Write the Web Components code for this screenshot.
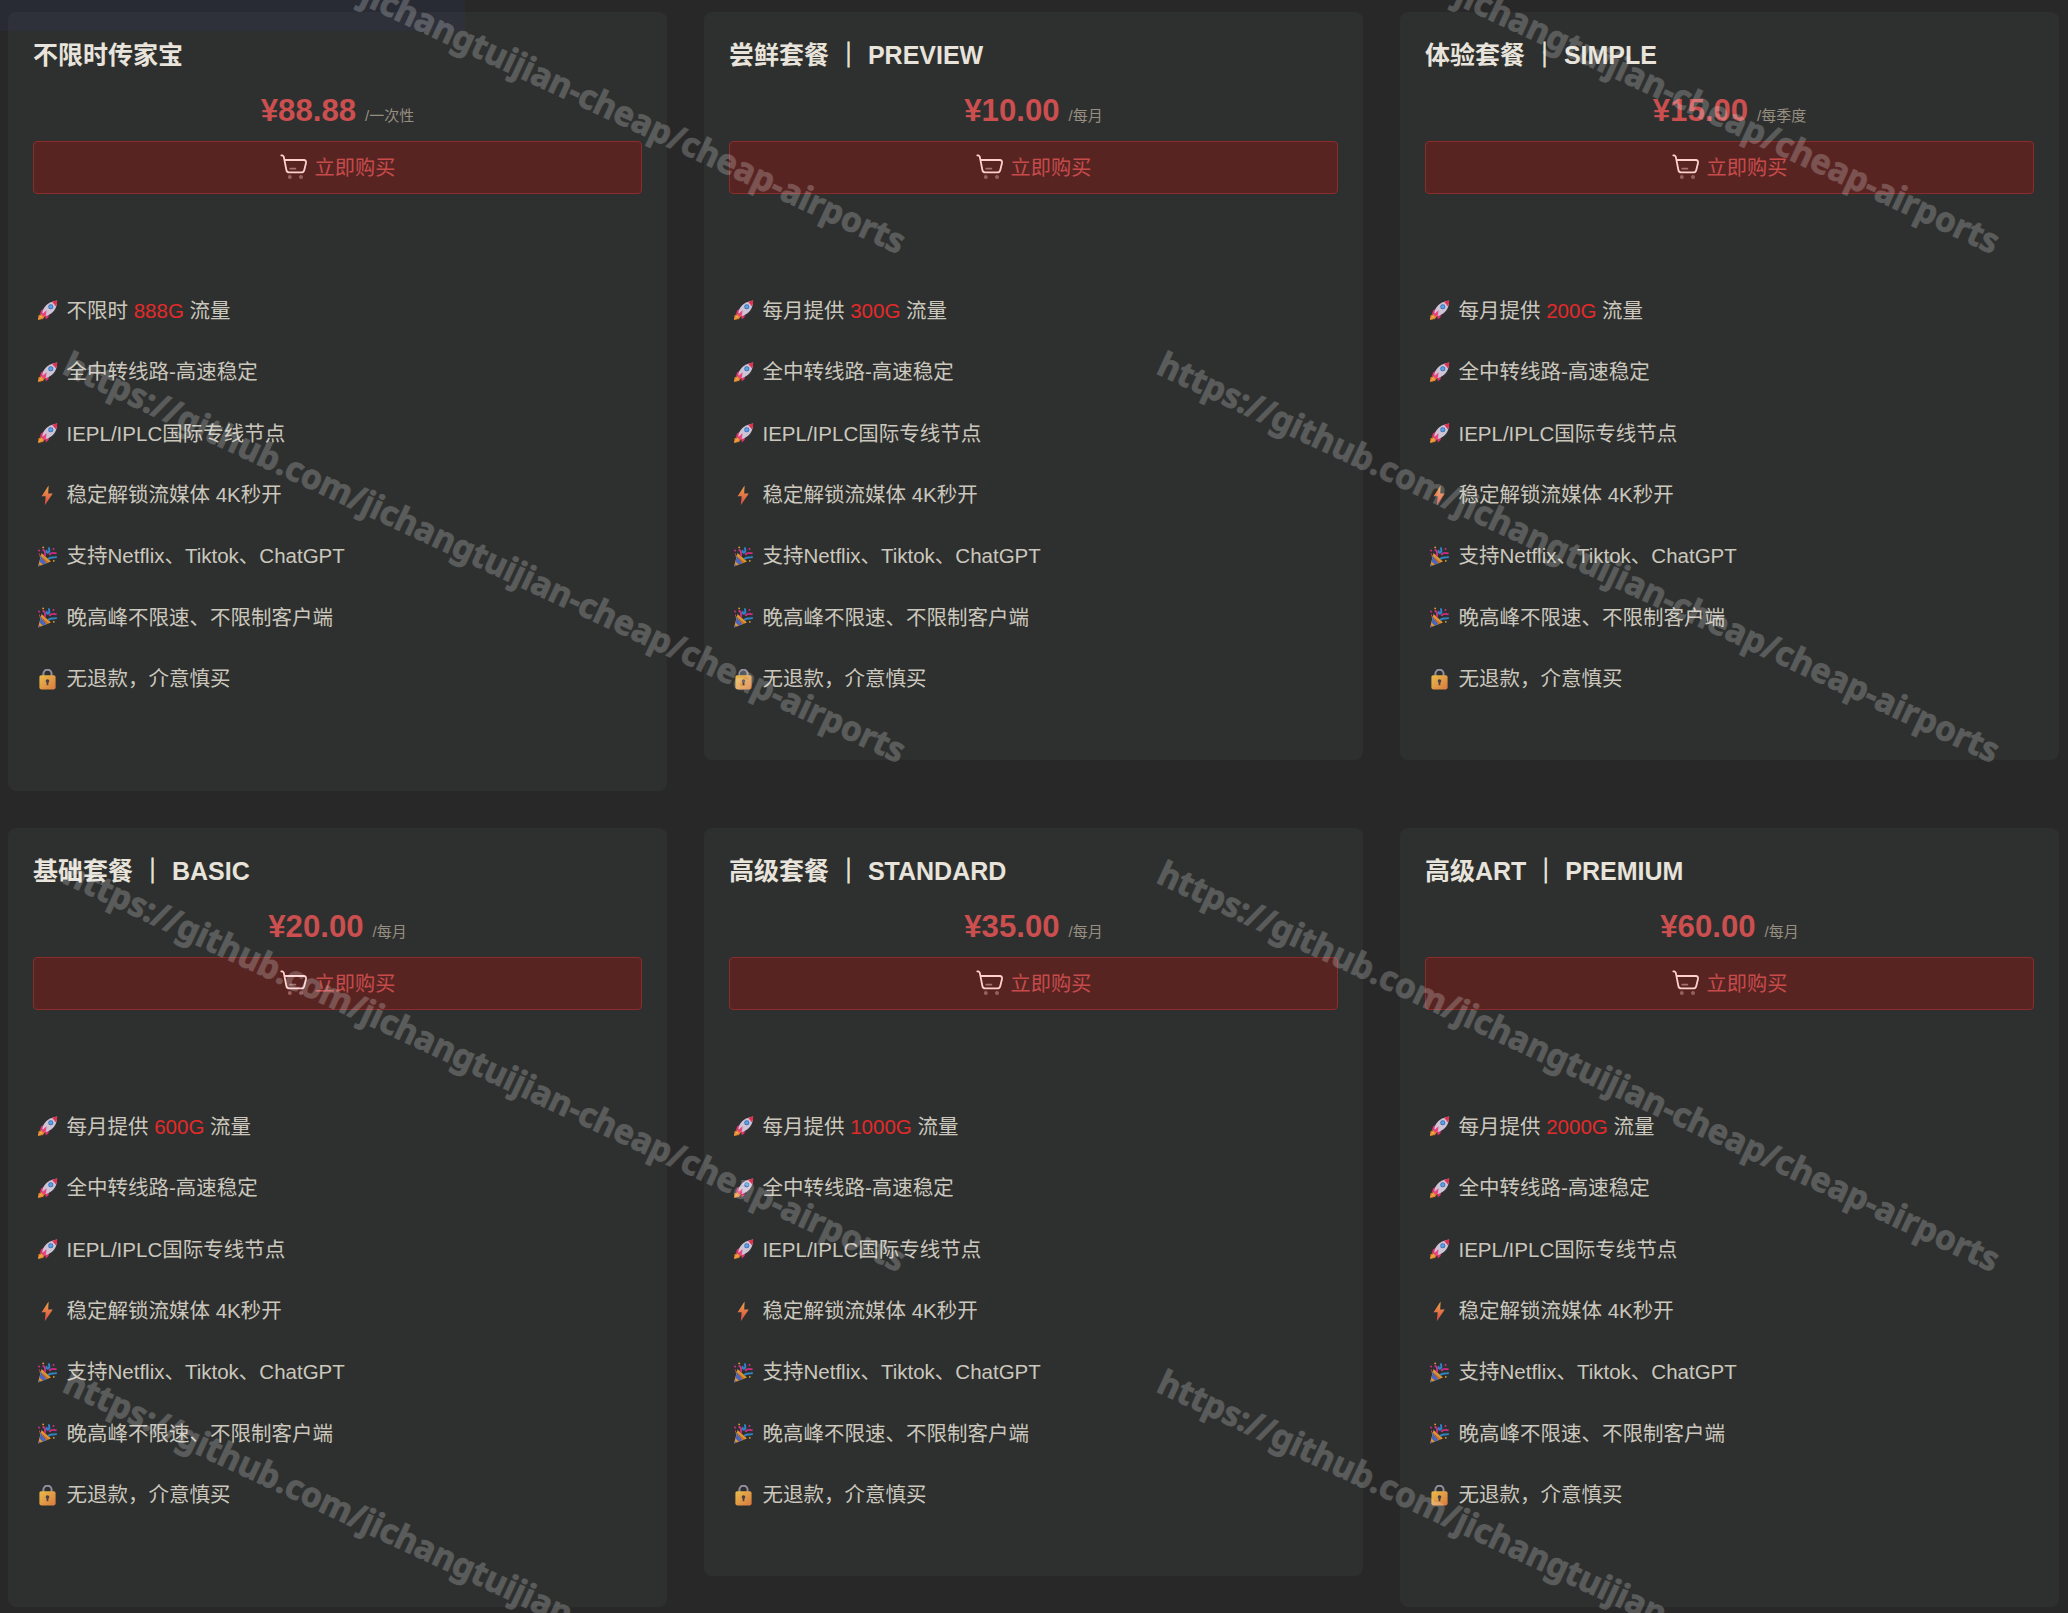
<!DOCTYPE html>
<html lang="zh-CN">
<head>
<meta charset="utf-8">
<title>套餐</title>
<style>
html,body{margin:0;height:1613px;overflow:hidden;background:#282828}
body{font-family:"Liberation Sans","Noto Sans CJK SC",sans-serif}
</style>
</head>
<body>
<plan-page></plan-page>
<script>
const ICONS = {
  rocket: `<path d="M1 20 1.4 15.5 5 13.5 8 16.3 6 19Z" fill="#d9822b"/><path d="M1 20 3 16 5.5 15 6 17Z" fill="#f0a040"/><path d="M7.5 8.6 4.2 10.2 2.8 14 7 13.2ZM12.2 12.8 11.6 17 8.8 19.6 8 14.4Z" fill="#e0336f"/><path d="M5.3 13.6C5.6 7.1 11 2 20 .6 20.4 8.6 15.6 14.6 8.6 16.2Z" fill="#cfc3d6"/><path d="M15.2 1.9C17 1 18.6.6 20.2.4 20.4 2.4 19.9 4.5 19 6.2Z" fill="#e0304f"/><circle cx="13.8" cy="6.8" r="2.5" fill="#3b6fb0"/><circle cx="13.8" cy="6.8" r="1.7" fill="#5aa2e8"/><path d="M4.4 14.8 9.6 10.2 8.8 15.8 6.2 16.6Z" fill="#e8437c"/>`,
  bolt: `<defs><linearGradient id="b" x2="0" y2="1"><stop stop-color="#e8a748"/><stop offset="1" stop-color="#dd4545"/></linearGradient></defs><path d="M11.6.6 4.6 11.3h4.1L7.8 20.2 15.8 8.6h-4.6Z" fill="url(#b)"/>`,
  party: `<path d="M4.6 7 1 20.4 14 15.6Z" fill="#dd9433"/><path d="M4.2 10 2.4 15.6 5.8 18.6 9.4 17.2ZM1.7 18 1 20.2 3.3 19.5Z" fill="#4c64bb"/><path d="M5.8 12.2 10.8 16.8" stroke="#b8651d" stroke-width="1.2"/><path d="M5.6 3.8C8.2 4.3 8.6 7 7.8 10.2M12.6 9C13.4 6.8 15.8 6.4 19.6 7.4" fill="none" stroke="#d12e88" stroke-width="1.9"/><path d="M12.2 1.4C11.4 3.2 13.6 4.6 11.4 6.6 9.6 7 8.8 5.2 10.4 4.4M11.4 13C13.4 10.6 16 12.4 19.8 10.8" fill="none" stroke="#2f85c7" stroke-width="2"/><path d="M1.4 3.8 2.8 5.2M15.8 3.6 17.2 2.4M2 8.2h1" stroke="#d12e88" stroke-width="1.5"/><circle cx="6.2" cy="1.4" r=".9" fill="#e1a432"/><circle cx="16.8" cy="14.8" r=".9" fill="#e1a432"/><circle cx="3.2" cy="10" r=".7" fill="#d9963a"/>`,
  lock: `<defs><linearGradient id="l" x2="1" y2="1"><stop stop-color="#e9bd4b"/><stop offset="1" stop-color="#d9793f"/></linearGradient></defs><path d="M6.4 7.5V4.8a4.1 4.1 0 0 1 8.2 0v2.7" fill="none" stroke="#9690a0" stroke-width="2"/><rect x="2.4" y="6.2" width="16.2" height="14.2" rx="1.8" fill="url(#l)"/><circle cx="10.5" cy="12" r="1.8" fill="#4b3d45"/><path d="M10.5 12v4.2" stroke="#4b3d45" stroke-width="1.7"/>`
};

class EmojiIcon extends HTMLElement {
  connectedCallback() {
    this.attachShadow({mode:'open'}).innerHTML = `<style>:host{display:block;width:21px;height:21px;flex:none}svg{display:block}</style>
    <svg width="21" height="21" viewBox="0 0 21 21">${ICONS[this.getAttribute('name')]}</svg>`;
  }
}
customElements.define('emoji-icon', EmojiIcon);

class FeatureRow extends HTMLElement {
  connectedCallback() {
    this.attachShadow({mode:'open'}).innerHTML = `<style>
    :host{display:flex;align-items:center;height:61.4px;padding-left:3.6px;gap:8.9px;color:#cbc7bd;font-size:20.5px;line-height:30px}
    div{white-space:nowrap}
    ::slotted(b){font-weight:400;color:#e32a2a}</style>
    <emoji-icon name="${this.getAttribute('icon')}"></emoji-icon><div><slot></slot></div>`;
  }
}
customElements.define('feature-row', FeatureRow);

class BuyButton extends HTMLElement {
  connectedCallback() {
    this.attachShadow({mode:'open'}).innerHTML = `<style>
    :host{display:block}
    button{box-sizing:border-box;width:100%;height:53px;display:flex;align-items:center;justify-content:center;gap:7px;padding:0;background:#582422;border:1px solid #8a2c2c;border-radius:4px;color:#c64c4c;font:400 20.2px/30px "Liberation Sans","Noto Sans CJK SC",sans-serif}
    svg{display:block;margin-bottom:1px}</style>
    <button><svg width="28" height="26" viewBox="0 0 28 26" fill="none" stroke="#ffd0cd" stroke-width="1.8" stroke-linecap="round" stroke-linejoin="round"><path d="M1.3 1.3 2.6 1.5Q3.5 1.8 3.8 2.8L6.4 16Q6.8 18.4 9.2 18.4H21.2Q23.6 18.4 24.2 16.2L26 9Q26.4 6.2 23.8 6H4.7"/><path d="M10.2 14.6H15.4" opacity=".45"/><g fill="#96605d" stroke="none"><circle cx="9.8" cy="23" r="2"/><circle cx="21" cy="23" r="2"/></g></svg><span><slot></slot></span></button>`;
  }
}
customElements.define('buy-button', BuyButton);

class PlanCard extends HTMLElement {
  connectedCallback() {
    const name = this.getAttribute('name').replace('｜', '<i>｜</i>');
    this.attachShadow({mode:'open'}).innerHTML = `<style>
    :host{display:block;box-sizing:border-box;height:748px;padding:28px 25px 0;background:#2e302f;border-radius:8px}
    :host([tall]){height:779px}
    h2{margin:0;height:30px;font-size:25px;line-height:30px;font-weight:700;color:#e8e4dc;white-space:nowrap}
    i{font-style:normal;-webkit-text-stroke:.9px #e8e4dc}
    .price{height:71px;display:flex;justify-content:center;align-items:baseline;gap:9px;line-height:82px;color:#cb4f4f;font-size:31.2px;font-weight:700}
    small{font-size:15px;font-weight:400;color:#968e80}
    .list{margin-top:86.2px}</style>
    <h2>${name}</h2>
    <div class="price"><span>${this.getAttribute('price')}</span><small>/${this.getAttribute('period')}</small></div>
    <buy-button>立即购买</buy-button>
    <div class="list"><slot></slot></div>`;
  }
}
customElements.define('plan-card', PlanCard);

class WaterMark extends HTMLElement {
  connectedCallback() {
    let t = '';
    for (const x of [61, 1155]) for (const y of [-136, 373, 882, 1391])
      t += `<text transform="translate(${x} ${y}) rotate(25)" textLength="924" lengthAdjust="spacingAndGlyphs">https://github.com/jichangtuijian-cheap/cheap-airports</text>`;
    this.attachShadow({mode:'open'}).innerHTML = `<style>
    :host{position:absolute;inset:0;pointer-events:none}
    svg{display:block}text{font:700 34px "Noto Sans",sans-serif;fill:#fff;stroke:#fff;stroke-width:.8px;opacity:.21}</style>
    <svg width="2068" height="1613">${t}</svg>`;
  }
}
customElements.define('water-mark', WaterMark);

class PlanPage extends HTMLElement {
  connectedCallback() {
    const plans = [
      ['不限时传家宝','¥88.88','一次性','不限时','888G',1],
      ['尝鲜套餐 ｜ PREVIEW','¥10.00','每月','每月提供','300G',0],
      ['体验套餐 ｜ SIMPLE','¥15.00','每季度','每月提供','200G',0],
      ['基础套餐 ｜ BASIC','¥20.00','每月','每月提供','600G',1],
      ['高级套餐 ｜ STANDARD','¥35.00','每月','每月提供','1000G',0],
      ['高级ART ｜ PREMIUM','¥60.00','每月','每月提供','2000G',1]
    ];
    const rest = [['rocket','全中转线路-高速稳定'],['rocket','IEPL/IPLC国际专线节点'],['bolt','稳定解锁流媒体 4K秒开'],['party','支持Netflix、Tiktok、ChatGPT'],['party','晚高峰不限速、不限制客户端'],['lock','无退款，介意慎买']]
      .map(([i,t]) => `<feature-row icon="${i}">${t}</feature-row>`).join('');
    this.attachShadow({mode:'open'}).innerHTML = `<style>
    :host{display:block;position:relative;width:2068px;height:1613px;overflow:hidden}
    main{display:grid;grid-template-columns:repeat(3,659px);column-gap:37px;row-gap:37px;align-items:start;padding:12px 8px 0}
    .status{position:absolute;left:0;top:0;width:465px;height:31px;background:rgba(50,60,120,.15)}</style>
    <main>${plans.map(([n,p,d,l,g,tall]) => `<plan-card name="${n}" price="${p}" period="${d}"${tall?' tall':''}><feature-row icon="rocket">${l} <b>${g}</b> 流量</feature-row>${rest}</plan-card>`).join('')}</main>
    <div class="status"></div><water-mark></water-mark>`;
  }
}
customElements.define('plan-page', PlanPage);
</script>
</body>
</html>
